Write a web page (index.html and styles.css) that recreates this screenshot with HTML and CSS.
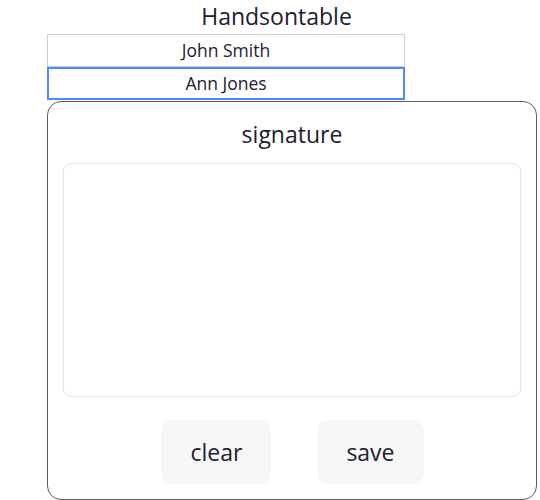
FILE: index.html
```html
<!DOCTYPE html>
<html>
<head>
  <title>Handsontable signature</title>
  <link rel="stylesheet" href="styles.css">
</head>
<body>

<h2 class="title">Handsontable</h2>

<div class="sheet">
  <div class="cell">John Smith</div>
  <div class="cell current">Ann Jones</div>
</div>

<div class="modal">
  <h3 class="modal-title">signature</h3>
  <div class="pad"></div>
  <div class="actions">
    <button class="btn">clear</button>
    <button class="btn">save</button>
  </div>
</div>

</body>
</html>
```

FILE: styles.css
```css
body {
  margin: 0;
  font-family: "Open Sans", "Noto Sans", sans-serif;
  color: #1c2030;
  background: #fff;
}

.title {
  margin: 0;
  padding: 1px 0 0 13px;
  height: 33px;
  line-height: 30px;
  font-size: 23px;
  font-weight: 400;
  text-align: center;
}

/* the little grid */
.sheet {
  margin-left: 47px;
  width: 358px;
}

.cell {
  box-sizing: border-box;
  height: 33px;
  line-height: 31px;
  border: 1px solid #cfcfcf;
  text-align: center;
  font-size: 17.5px;
}

.cell.current {
  border: 2px solid #4a8aff;
  line-height: 29px;
}

/* signature popup */
.modal {
  box-sizing: border-box;
  margin: 1px 0 0 47px;
  width: 490px;
  height: 399px;
  padding: 0 15px 15px;
  border: 1px solid #5e5e5e;
  border-radius: 14px;
  display: flex;
  flex-direction: column;
}

.modal-title {
  margin: 0;
  height: 61px;
  line-height: 64px;
  font-size: 23px;
  font-weight: 400;
  text-align: center;
}

.pad {
  height: 232px;
  border: 1px solid #e2e2e8;
  border-radius: 8px;
}

.actions {
  display: flex;
  justify-content: center;
  gap: 46px;
  margin-top: 23px;
  padding-left: 1px;
}

.btn {
  height: 64px;
  padding: 0 29px;
  border: none;
  border-radius: 12px;
  background: #f7f7f7;
  font-family: inherit;
  font-size: 23px;
  color: inherit;
}
```
